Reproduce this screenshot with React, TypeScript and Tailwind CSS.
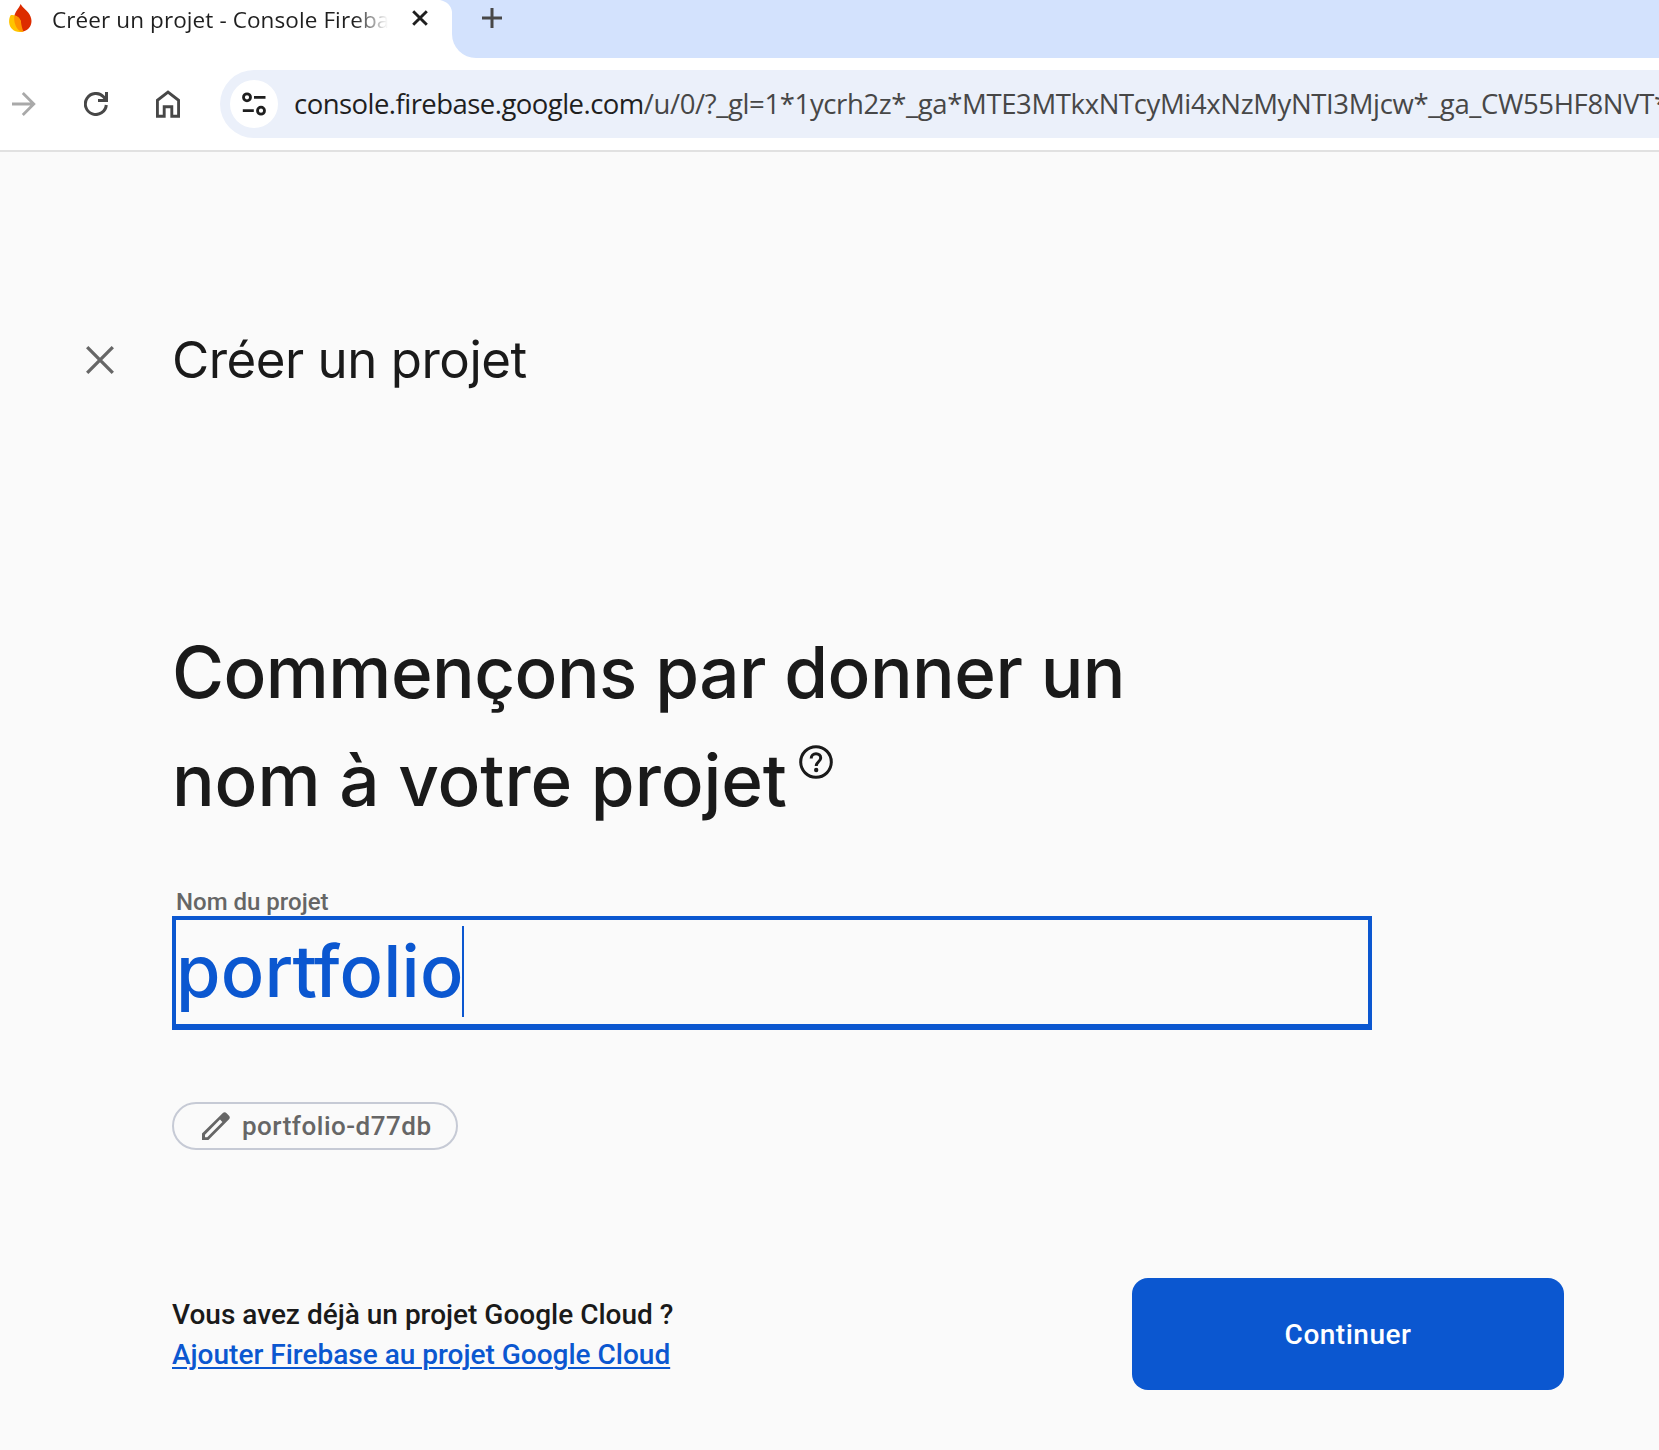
import React from "react";

function FirebaseLogo() {
  return (
    <svg className="h-7 w-6 shrink-0" viewBox="0 0 24 28">
      <path
        d="M11.600 0C10.800 2.800 8.300 5.200 6.800 8 5 11.200 4.600 14.500 5.500 18c1.200 5 4 8.700 7.500 9.800C18.600 27 22.500 22.600 22.500 17c0-3.200-1.400-6.100-3.500-8.800C16.700 5.400 13.200 3 11.600 0Z"
        fill="#dd2c00"
      />
      <path
        d="M1.600 11.200C.2 13.700-.1 16.500.2 19c.5 5 4.800 9.100 10.800 9 1.400 0 2.400-.2 3.400-.6-3.200-2.400-2.200-6.500-2.400-9.200-.3-3.700-4.800-8-10.400-7Z"
        fill="#ffc400"
      />
      <path
        d="M5.400 11.600c-.5 3.300-.2 7 1.400 10.400 1.100 2.400 2.900 4.500 5 5.500 1 .2 1.800.1 2.600-.3-1.200-2.400-2-6.200-2.400-9-.4-3-3-5.600-6.600-6.600Z"
        fill="#ff9100"
      />
    </svg>
  );
}

function TabStrip() {
  return (
    <div className="flex h-[58px] bg-white">
      <div className="flex h-[58px] w-[452px] shrink-0 items-start pl-[9px] pt-1">
        <FirebaseLogo />
        <div className="ml-[19px] w-[336px] overflow-hidden whitespace-nowrap font-['Open_Sans',sans-serif] text-[22.5px] leading-[32px] tracking-[0.1px] text-[#1f1f1f] [mask-image:linear-gradient(to_right,black_90%,transparent)]">
          Créer un projet - Console Firebase
        </div>
        <svg className="ml-6 mt-[6px] size-4 shrink-0" viewBox="0 0 16 16">
          <path d="M1.200 1.200 14.800 14.800M14.800 1.200 1.200 14.800" stroke="#1f1f1f" strokeWidth="2.900" />
        </svg>
      </div>
      <div className="relative flex flex-1 items-start rounded-bl-[24px] bg-[#d3e2fd] pl-[30px] pt-2">
        <svg className="absolute -left-3 top-0 h-3 w-3" viewBox="0 0 12 12">
          <path d="M0 0H12V12C11.500 6 7 1.500 0 0Z" fill="#d3e2fd" />
        </svg>
        <svg className="size-5" viewBox="0 0 20 20">
          <path d="M10 0V20M0 10H20" stroke="#474747" strokeWidth="3" />
        </svg>
      </div>
    </div>
  );
}

function Toolbar() {
  return (
    <div className="flex h-[94px] items-center border-b-2 border-[#e1e1e1] bg-white pl-3">
      <svg className="h-6 w-6 shrink-0" viewBox="0 0 24 24" fill="none" stroke="#a9a9a9" strokeWidth="2.800">
        <path d="M0 12H22M10.800 1 21.800 12 10.800 23" />
      </svg>
      <svg className="ml-12 h-6 w-6 shrink-0" viewBox="0 0 24 24" fill="none" stroke="#474747" strokeWidth="3">
        <path d="M22.300 13A10.500 10.500 0 1 1 19.500 4.800L22.600 8.400M22.500 0V8.500H14" />
      </svg>
      <svg className="ml-12 h-7 w-6 shrink-0" viewBox="0 0 24 28" fill="none" stroke="#474747" strokeWidth="2.900">
        <path d="M1.400 26.200V10.300L12 2 22.600 10.300V26.200H15.800V16.700H8.200V26.200Z" />
      </svg>
      <div className="ml-10 flex h-[68px] min-w-0 flex-1 items-center overflow-hidden rounded-l-full bg-[#ebf0fa] pl-[10px]">
        <div className="flex size-12 shrink-0 items-center justify-center rounded-full bg-white">
          <svg className="h-6 w-6" viewBox="0 0 24 24" fill="none" stroke="#1f1f1f" strokeWidth="2.800">
            <circle cx="5" cy="5.300" r="3.500" />
            <path d="M12 5.300H23.500M.8 18.700H11.800" />
            <circle cx="19" cy="18.700" r="3.500" />
          </svg>
        </div>
        <div className="ml-4 whitespace-nowrap font-['Open_Sans',sans-serif] text-[27.5px] leading-[42px] text-[#474747]">
          <span className="tracking-[-0.54px] text-[#1f1f1f]">console.firebase.google.com</span>
          <span className="tracking-[-0.37px]">
            /u/0/?_gl=1*1ycrh2z*_ga*MTE3MTkxNTcyMi4xNzMyNTI3Mjcw*_ga_CW55HF8NVT*
          </span>
        </div>
      </div>
    </div>
  );
}

export default function App() {
  return (
    <div className="h-[1450px] w-[1659px] overflow-hidden bg-[#fafafa] font-['Roboto',sans-serif] text-[#1a1a1a]">
      <TabStrip />
      <Toolbar />
      <main className="pr-[95px]">
        <header className="flex items-center pl-[86px] pt-[172px]">
          <svg className="size-7" viewBox="0 0 28 28">
            <path d="M1.200 1.200 26.800 26.800M26.800 1.200 1.200 26.800" stroke="#666" strokeWidth="3.300" />
          </svg>
          <h1 className="ml-[58px] h-[72px] font-['Inter',sans-serif] text-[51px] leading-[72px] tracking-[-0.5px]">
            Créer un projet
          </h1>
        </header>

        <div className="pl-[172px]">
          <h2 className="mt-[222px] whitespace-nowrap font-['Inter',sans-serif] text-[71px] font-medium leading-[108px]">
            <span className="block tracking-[-0.55px]">Commençons par donner un</span>
            <span className="flex items-start">
              <span className="tracking-[-0.1px]">nom à votre projet</span>
              <svg className="ml-[12px] mt-[19px] size-[34px]" viewBox="0 0 34 34" fill="none" stroke="#1a1a1a">
                <circle cx="17" cy="17" r="15.300" strokeWidth="3" />
                <path
                  d="M12.200 13.600C12.200 10.500 14.300 8.800 17 8.800c2.800 0 4.700 1.800 4.700 4.100 0 3.600-4.500 4.100-4.500 8"
                  strokeWidth="3"
                />
                <circle cx="17.200" cy="25" r="2.200" fill="#1a1a1a" stroke="none" />
              </svg>
            </span>
          </h2>

          <label className="mt-[54px] block pl-1 text-[24px] font-medium leading-[28px] text-[#666]">Nom du projet</label>
          <div className="flex h-[114px] w-[1200px] items-start border-4 border-b-[6px] border-[#0b57d0] pt-[6px]">
            <span className="w-[286px] whitespace-nowrap font-['Inter',sans-serif] text-[72px] font-medium leading-[90px] tracking-[0.2px] text-[#0b57d0]">
              por<span className="tracking-[-3px]">t</span>folio
            </span>
            <span className="h-[91px] w-[2px] bg-[#0b57d0]" />
          </div>

          <div className="mt-[72px] flex h-12 w-[286px] items-center rounded-full border-2 border-[#c6cad5] pl-7 text-[#666]">
            <svg className="size-7" viewBox="0 0 28 28" fill="currentColor">
              <path
                fillRule="evenodd"
                d="M0 28V21.600L20.600 1.200Q22.600-.800 24.600 1.200L26.800 3.400Q28.800 5.400 26.800 7.400L6.400 28ZM3 25.200H5.200L20.400 10 18 7.600 3 22.800Z"
              />
            </svg>
            <span className="ml-3 whitespace-nowrap text-[26px] font-medium leading-[40px] tracking-[0.5px]">
              portfolio-d77db
            </span>
          </div>

          <footer className="mt-[128px] flex items-center justify-between">
            <div className="whitespace-nowrap pt-px text-[28px] font-medium leading-[40px]">
              <p>Vous avez déjà un projet Google Cloud ?</p>
              <a className="text-[#0b57d0] underline decoration-2 underline-offset-[3px]">
                Ajouter Firebase au projet Google Cloud
              </a>
            </div>
            <button className="h-28 w-[432px] rounded-[16px] bg-[#0b57d0] pt-0.5 text-[28px] font-medium tracking-[0.5px] text-white">
              Continuer
            </button>
          </footer>
        </div>
      </main>
    </div>
  );
}
